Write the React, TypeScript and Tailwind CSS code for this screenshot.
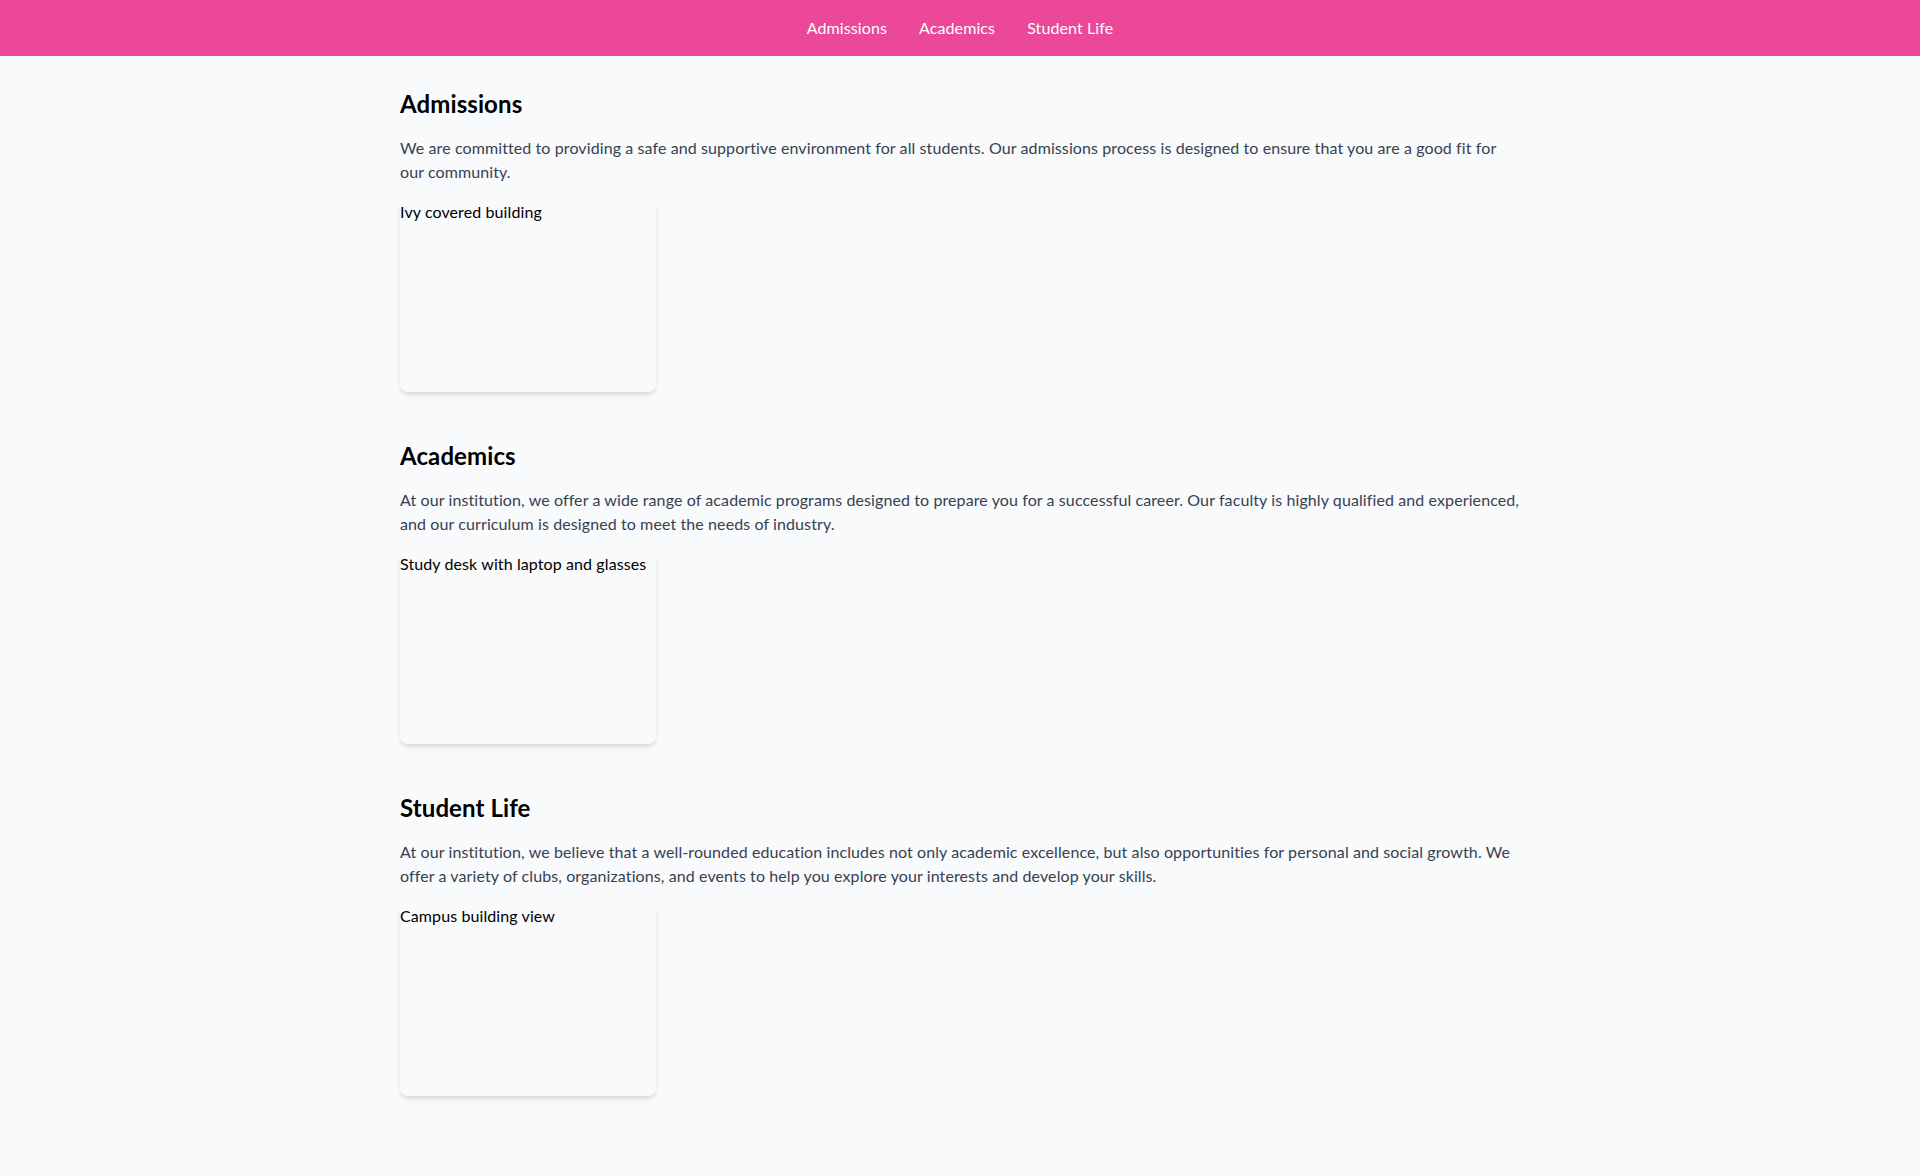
import React from "react";

const sections = [
  {
    id: "admissions",
    title: "Admissions",
    text: "We are committed to providing a safe and supportive environment for all students. Our admissions process is designed to ensure that you are a good fit for our community.",
    alt: "Ivy covered building",
  },
  {
    id: "academics",
    title: "Academics",
    text: "At our institution, we offer a wide range of academic programs designed to prepare you for a successful career. Our faculty is highly qualified and experienced, and our curriculum is designed to meet the needs of industry.",
    alt: "Study desk with laptop and glasses",
  },
  {
    id: "student-life",
    title: "Student Life",
    text: "At our institution, we believe that a well-rounded education includes not only academic excellence, but also opportunities for personal and social growth. We offer a variety of clubs, organizations, and events to help you explore your interests and develop your skills.",
    alt: "Campus building view",
  },
];

export default function App() {
  return (
    <div className="min-h-screen bg-[#f9fafb] font-['Lato',sans-serif] tracking-[0.1px]">
      <header className="bg-[#ec4899] py-4">
        <nav className="flex justify-center gap-8 text-white text-base leading-6">
          <a href="#admissions">Admissions</a>
          <a href="#academics">Academics</a>
          <a href="#student-life">Student Life</a>
        </nav>
      </header>
      <main className="max-w-6xl mx-auto px-4 py-8">
        {sections.map((s) => (
          <section key={s.id} id={s.id} className="mb-12">
            <h2 className="text-2xl font-bold text-black mb-4">{s.title}</h2>
            <p className="text-[#374151] mb-4">{s.text}</p>
            <div className="w-64 h-48 rounded-lg shadow-md bg-[#f9fafb] text-black leading-6">
              {s.alt}
            </div>
          </section>
        ))}
      </main>
    </div>
  );
}
